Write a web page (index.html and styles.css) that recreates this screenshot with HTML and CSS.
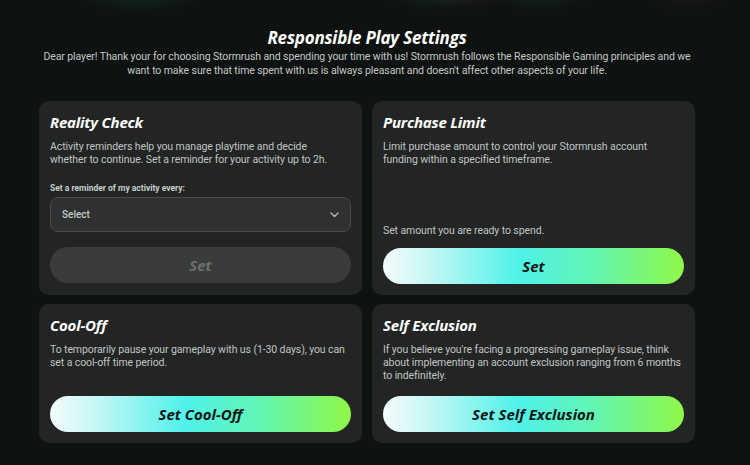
FILE: index.html
```html
<!DOCTYPE html>
<html lang="en">
<head>
<meta charset="UTF-8">
<title>Responsible Play Settings</title>
<link rel="stylesheet" href="styles.css">
</head>
<body>
<div class="pagina">
    <h1 class="titolo">Responsible Play Settings</h1>
    <p class="intro">Dear player! Thank your for choosing Stormrush and spending your time with us! Stormrush follows the Responsible Gaming principles and we<br>want to make sure that time spent with us is always pleasant and doesn't affect other aspects of your life.</p>

    <div class="griglia">
        <div class="card">
            <h2 class="card-titolo">Reality Check</h2>
            <p class="card-testo">Activity reminders help you manage playtime and decide<br>whether to continue. Set a reminder for your activity up to 2h.</p>
            <div class="etichetta">Set a reminder of my activity every:</div>
            <div class="select">
                <span>Select</span>
                <svg width="9" height="6" viewBox="0 0 9 6"><polyline points="1,1 4.5,4.5 8,1" fill="none" stroke="#b4b8b6" stroke-width="1.4" stroke-linecap="round" stroke-linejoin="round"/></svg>
            </div>
            <button class="bottone spento">Set</button>
        </div>

        <div class="card">
            <h2 class="card-titolo">Purchase Limit</h2>
            <p class="card-testo">Limit purchase amount to control your Stormrush account funding within a specified timeframe.</p>
            <p class="card-testo nota">Set amount you are ready to spend.</p>
            <button class="bottone">Set</button>
        </div>

        <div class="card">
            <h2 class="card-titolo">Cool-Off</h2>
            <p class="card-testo">To temporarily pause your gameplay with us (1-30 days), you can set a cool-off time period.</p>
            <button class="bottone">Set Cool-Off</button>
        </div>

        <div class="card">
            <h2 class="card-titolo">Self Exclusion</h2>
            <p class="card-testo">If you believe you're facing a progressing gameplay issue, think about implementing an account exclusion ranging from 6 months to indefinitely.</p>
            <button class="bottone">Set Self Exclusion</button>
        </div>
    </div>
</div>
</body>
</html>
```

FILE: styles.css
```css
body {
    margin: 0;
    height: 465px;
    overflow: hidden;
    font-family: Roboto, "Noto Sans", sans-serif;
    color: #fff;
    background-color: #0e1210;
    background-image:
        radial-gradient(60px 12px at 140px 0, rgba(40, 150, 130, 0.12), transparent),
        radial-gradient(50px 10px at 435px 0, rgba(40, 150, 130, 0.1), transparent),
        radial-gradient(40px 10px at 470px 0, rgba(150, 40, 90, 0.1), transparent),
        radial-gradient(50px 10px at 540px 0, rgba(40, 150, 130, 0.1), transparent),
        radial-gradient(40px 10px at 690px 0, rgba(150, 40, 110, 0.09), transparent);
    background-repeat: no-repeat;
}

.pagina {width: 656px; margin-left: 39px; padding-top: 28px;}

.titolo {margin: 0; font-family: "Open Sans", sans-serif; font-size: 17px; line-height: 20px; font-weight: 700; font-style: italic; text-align: center; letter-spacing: -0.2px;}
.intro {margin: 2px -12px 0; font-size: 10.5px; line-height: 14px; color: #c3c7c5; text-align: center; letter-spacing: -0.1px;}

.griglia {display: grid; grid-template-columns: 1fr 1fr; grid-template-rows: 194px 139px; gap: 9px 10px; margin-top: 23px;}

.card {display: flex; flex-direction: column; padding: 11px 11px 11px; background: #222524; border-radius: 10px;}
.card-titolo {margin: 0; font-family: "Open Sans", sans-serif; font-size: 15px; line-height: 20px; font-weight: 700; font-style: italic; letter-spacing: -0.2px;}
.card-testo {margin: 8px 0 0; font-size: 10.5px; line-height: 13px; color: #c0c4c2; letter-spacing: -0.1px;}
.nota {margin-top: auto;}

.etichetta {margin-top: 16px; font-size: 8.5px; line-height: 12px; font-weight: 700; color: #c9ccca;}
.select {display: flex; align-items: center; justify-content: space-between; height: 33px; margin-top: 3px; padding: 0 11px; background: #2e312f; border: 1px solid #484b49; border-radius: 8px; font-size: 10px; font-weight: 500; color: #c5c9c7;}

.bottone {display: block; width: 100%; height: 36px; margin-top: auto; border: 0; border-radius: 18px; font-family: "Open Sans", sans-serif; font-size: 15px; font-weight: 700; font-style: italic; color: #111614; background: linear-gradient(90deg, #f4fbfb 0%, #c6f7f5 15%, #4ff2ea 45%, #62f5b2 70%, #8ff746 100%);}
.nota + .bottone {margin-top: 11px;}
.spento {margin-top: 15px; background: #393c3a; color: #6d706e;}
```
